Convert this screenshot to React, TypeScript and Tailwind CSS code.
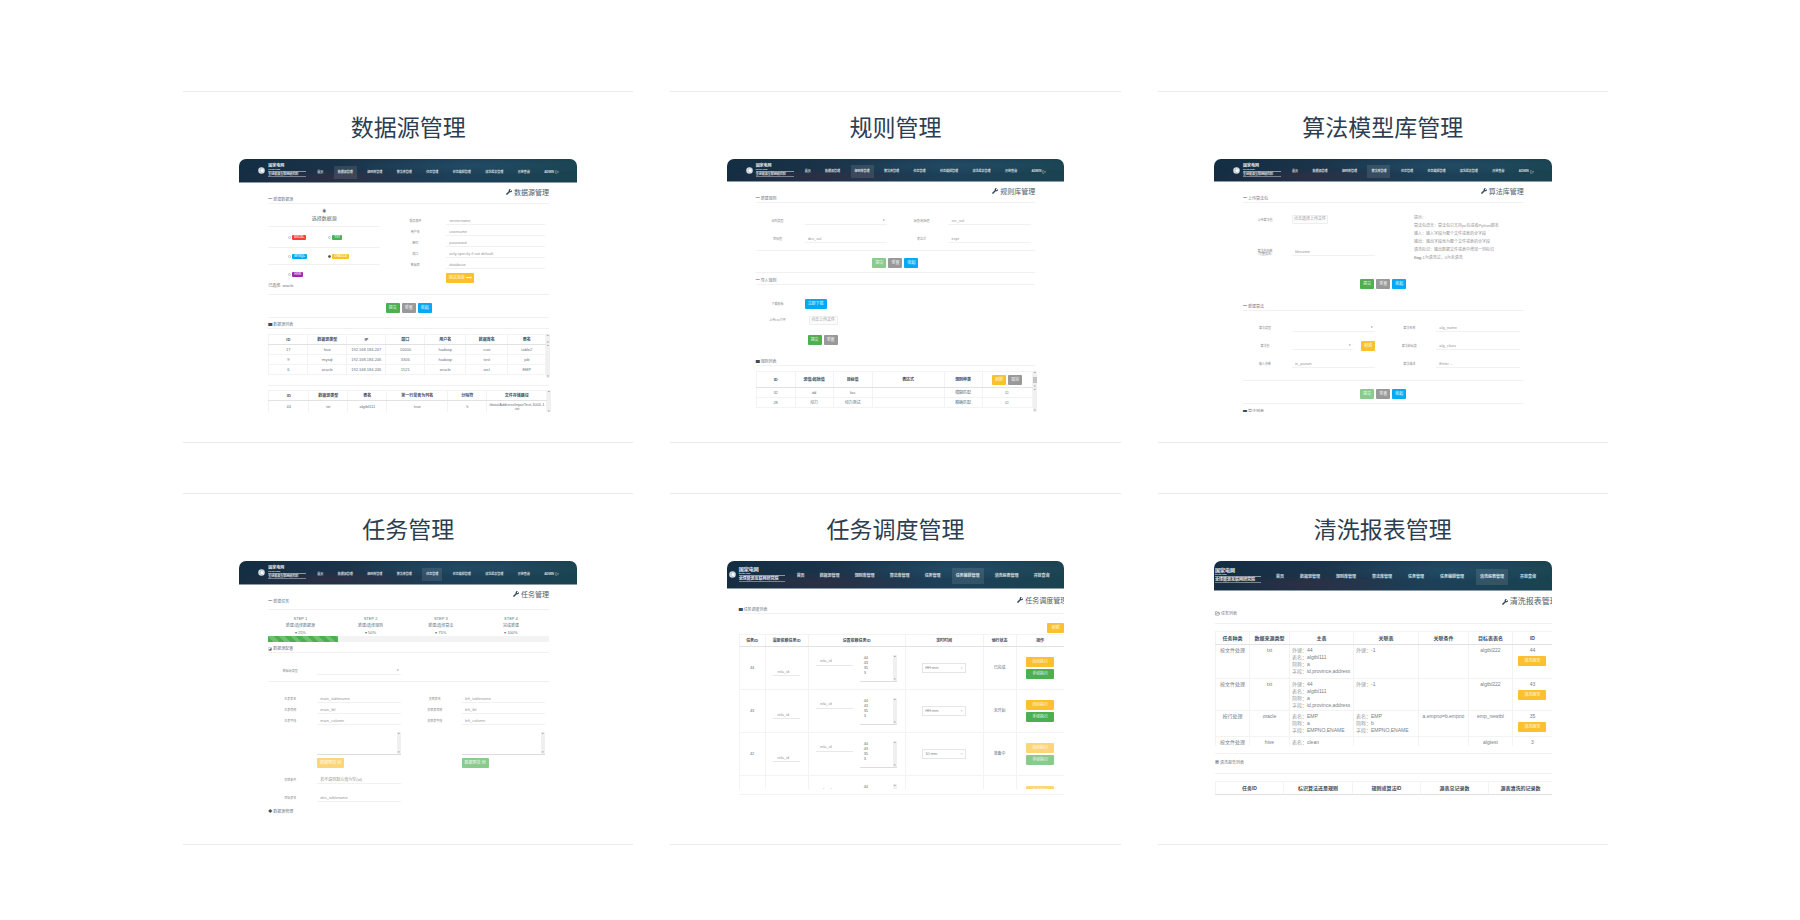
import { useId, type ReactNode } from 'react';
import clsx from 'clsx';
import { FolderOpen, LogOut } from 'lucide-react';
import { FaWrench } from 'react-icons/fa';

const navItems = ['首页', '数据源管理', '规则库管理', '算法库管理', '任务管理', '任务编辑管理', '清洗报表管理', '开放查询'];

const tones = {
  green: 'bg-[#4caf50]',
  gray: 'bg-[#999999]',
  blue: 'bg-[#03a9f4]',
  yellow: 'bg-[#fbc02d]',
  red: 'bg-[#f44336]',
  purple: 'bg-[#9c27b0]',
};

type Tone = keyof typeof tones;

function Btn({ tone, children, className = 'w-[14px]', faded }: { tone: Tone; children: ReactNode; className?: string; faded?: boolean }) {
  return (
    <button
      type="button"
      className={clsx('h-[10px] shrink-0 rounded-[1px] text-center text-[4px] leading-none whitespace-nowrap text-white/90', tones[tone], faded && 'opacity-65', className)}
    >
      {children}
    </button>
  );
}

function FormButtons({ faded }: { faded?: boolean }) {
  return (
    <div className="flex justify-center gap-[2px]">
      <Btn tone="green" faded={faded}>提交</Btn>
      <Btn tone="gray">重置</Btn>
      <Btn tone="blue">收起</Btn>
    </div>
  );
}

function Field({ label, placeholder, select, labelClass = 'w-[44px] mr-[5px]', className, extra }: {
  label: ReactNode;
  placeholder?: string;
  select?: boolean;
  labelClass?: string;
  className?: string;
  extra?: ReactNode;
}) {
  const id = useId();
  return (
    <div className={clsx('flex h-[8px] items-center', className)}>
      <label htmlFor={id} className={clsx('shrink-0 pt-[1px] text-center text-[3px] text-[#8c8c8c]', labelClass)}>{label}</label>
      <div className="mr-[4px] flex h-full min-w-0 flex-1 items-center border-b border-[#f1f1f1]">
        {select ? (
          <>
            <select id={id} className="h-full min-w-0 flex-1 appearance-none bg-transparent" />
            <span className="pr-[2px] text-[3px] text-[#666]">▾</span>
          </>
        ) : (
          <input id={id} placeholder={placeholder} className="h-full w-full min-w-0 bg-transparent pl-[3px] placeholder:text-[#9a9a9a]" />
        )}
      </div>
      {extra}
    </div>
  );
}

function SectionTitle({ icon = '━', children, className }: { icon?: ReactNode; children: ReactNode; className?: string }) {
  return (
    <h4 className={clsx('flex h-[7px] items-end gap-[1px] border-b border-[#f1f1f1] pb-[1px] text-[#6f7a85]', className)}>
      <span className="text-[#3d4c5a]">{icon}</span>
      {children}
    </h4>
  );
}

function PageTitle({ children, className }: { children: ReactNode; className?: string }) {
  return (
    <h3 className={clsx('flex items-center justify-end whitespace-nowrap text-[#4f5d6a]', className)}>
      <FaWrench className="mr-[2px] size-[6px] shrink-0 text-[#34495e]" />
      {children}
    </h3>
  );
}

function Scrollbar({ className, thumb }: { className?: string; thumb?: boolean }) {
  return (
    <div className={clsx('flex w-[4px] shrink-0 flex-col items-center justify-between bg-[#f0f0f0] text-[3px] text-[#888]', className)}>
      <span>▴</span>
      {thumb && <span className="h-[6px] w-[4px] bg-[#c4c4c4]" />}
      <span>▾</span>
    </div>
  );
}

function DataTable({ head, rows, widths, headHeight = 'h-[10px]', rowHeight = 'h-[10px]' }: {
  head: ReactNode[];
  rows: ReactNode[][];
  widths: string[];
  headHeight?: string;
  rowHeight?: string;
}) {
  return (
    <table className="w-full min-w-0 table-fixed border-collapse text-center text-[#66727e]">
      <thead>
        <tr className={headHeight}>
          {head.map((cell, i) => (
            <th key={i} className={clsx('border border-[#f3f3f3] border-b-[#e2e2e2] p-0 font-bold whitespace-nowrap text-[#3f4e5d]', widths[i])}>{cell}</th>
          ))}
        </tr>
      </thead>
      <tbody>
        {rows.map((row, r) => (
          <tr key={r} className={rowHeight}>
            {row.map((cell, i) => (
              <td key={i} className="border border-[#f3f3f3] p-0">{cell}</td>
            ))}
          </tr>
        ))}
      </tbody>
    </table>
  );
}

function Globe() {
  return (
    <svg viewBox="0 0 14 14" className="size-[7px] shrink-0">
      <circle cx="7" cy="7" r="6.5" fill="#dfe6ea" />
      <path d="M2 4 Q7 8 12 3 M1 8 Q7 12 13 7 M6 1 Q3 7 7 13 M8 1 Q11 7 8 13" stroke="#8fa3b0" fill="none" strokeWidth="0.8" />
      <circle cx="8" cy="7" r="3" fill="#ffffff" />
    </svg>
  );
}

function TopBar({ active, size = 'small', className = 'h-[24px]' }: { active: string; size?: 'small' | 'large' | 'cropped'; className?: string }) {
  const small = size === 'small';
  return (
    <header
      className={clsx(
        'flex items-center overflow-hidden border-b border-[#8d9ba6] whitespace-nowrap text-white/80',
        'bg-[radial-gradient(ellipse_at_28%_80%,#4a2a4066,transparent_30%),radial-gradient(ellipse_at_70%_30%,#2a5a7566,transparent_40%),linear-gradient(100deg,#132d42,#1b3348_30%,#1d4059_65%,#1a4350)]',
        small ? 'pl-[19px] text-[3px]' : 'text-[4px]',
        size === 'large' && 'pl-[2px]',
        size === 'cropped' && 'pl-[1px]',
        className,
      )}
    >
      {size !== 'cropped' && <Globe />}
      <div className={clsx('shrink-0 font-bold text-white/90', small ? 'ml-[3px] w-[38px]' : 'w-[46px]', size === 'large' && 'ml-[3px]')}>
        <div className={small ? 'text-[4px]' : 'text-[5px]'}>国家电网</div>
        <div className="border-b border-white/50 pb-[1px] text-[2px]">STATE GRID</div>
        <div className="mt-[1px] border-b border-white/40">全球能源互联网研究院</div>
      </div>
      <nav
        className={clsx(
          'flex h-full flex-1 items-center pt-[3px] font-bold',
          small && 'mr-[14px] ml-[7px] justify-between',
          size === 'large' && 'ml-[8px] gap-[7px]',
          size === 'cropped' && 'ml-[11px] gap-[8px]',
        )}
      >
        {navItems.map((item) => (
          <a key={item} href="#" className={clsx('flex shrink-0 items-center px-[4px]', small ? 'h-[13px]' : 'h-[16px]', item === active && 'bg-white/10')}>
            {item}
          </a>
        ))}
        <a href="#" className="flex shrink-0 items-center gap-[1px] px-[4px]">
          ADMIN <LogOut className="size-[4px]" />
        </a>
      </nav>
    </header>
  );
}

function SourceOption({ tone, label, checked }: { tone: Tone; label: string; checked?: boolean }) {
  return (
    <label className="flex w-[40px] items-center gap-[1px]">
      <input type="radio" name="source" defaultChecked={checked} className="size-[3px] appearance-none rounded-full border border-[#c4c4c4] checked:border-[#555] checked:bg-[#555]" />
      <span className={clsx('flex h-[5px] items-center rounded-[1px] px-[2px] text-[3px] font-bold text-white/80', tones[tone])}>{label}</span>
    </label>
  );
}

function SourcePreview() {
  const label = 'w-[62px] ml-[4px]';
  return (
    <>
      <TopBar active="数据源管理" />
      <div className="pr-[28px] pl-[29px]">
        <PageTitle className="mt-[4px] h-[10px] text-[7px]">数据源管理</PageTitle>
        <SectionTitle>新建数据源</SectionTitle>
        <div className="flex border-b border-[#f1f1f1] pb-[5px]">
          <div className="w-[112px]">
            <div className="flex h-[23px] flex-col items-center gap-[2px] border-b border-[#f1f1f1] pt-[6px] text-[#5c6975]">
              <span>◉</span>
              <span className="text-[5px]">选择数据源</span>
            </div>
            <div className="flex h-[21px] items-center border-b border-[#f1f1f1] pl-[20px]">
              <SourceOption tone="red" label="EXCEL" />
              <SourceOption tone="green" label="TXT" />
            </div>
            <div className="flex h-[17px] items-center border-b border-[#f1f1f1] pl-[20px]">
              <SourceOption tone="blue" label="MYSQL" />
              <SourceOption tone="yellow" label="ORACLE" checked />
            </div>
            <div className="flex h-[18px] items-center pl-[20px]">
              <SourceOption tone="purple" label="HIVE" />
            </div>
            <div className="flex h-[6px] items-center text-[#66727e]">已选择: oracle</div>
          </div>
          <div className="flex flex-1 flex-col gap-[3px] pt-[13px]">
            <Field labelClass={label} label="服务器IP" placeholder="servername" />
            <Field labelClass={label} label="用户名" placeholder="username" />
            <Field labelClass={label} label="密码" placeholder="password" />
            <Field labelClass={label} label="端口" placeholder="only specify if not default" />
            <Field labelClass={label} label="数据库" placeholder="database" />
            <Btn tone="yellow" className="mt-[1px] ml-[66px] w-[28px]">测试连接 ⟶</Btn>
          </div>
        </div>
        <div className="border-b border-[#f1f1f1] pt-[8px] pb-[4px]"><FormButtons /></div>
        <SectionTitle className="mt-[4px]" icon="▆">数据源列表</SectionTitle>
        <div className="mt-[5px] flex h-[44px] items-start">
          <DataTable
            widths={['w-[39px]', 'w-[39px]', 'w-[39px]', 'w-[39px]', 'w-[41px]', 'w-[42px]', 'w-[38px]']}
            head={['ID', '数据源类型', 'IP', '端口', '用户名', '数据库名', '表名']}
            rows={[
              ['17', 'hive', '192.168.184.247', '10000', 'hadoop', 'cust', 'table2'],
              ['9', 'mysql', '192.168.184.246', '3306', 'hadoop', 'test', 'job'],
              ['6', 'oracle', '192.168.184.246', '1521', 'oracle', 'orcl', 'EMP'],
            ]}
          />
          <div className="flex h-full flex-col">
            <Scrollbar className="h-[10px]" />
            <Scrollbar className="flex-1" />
          </div>
        </div>
        <div className="mt-[7px] flex items-stretch border-t border-[#f1f1f1] pt-[4px]">
          <DataTable
            widths={['w-[40px]', 'w-[39px]', 'w-[39px]', 'w-[61px]', 'w-[39px]', 'w-[60px]']}
            head={['ID', '数据源类型', '表名', '第一行是否为列名', '分隔符', '文件存储路径']}
            rows={[['44', 'txt', 'algtbl111', 'true', '\\t', <>/data/Address/inputTest,1000,1<br />.txt</>]]}
            rowHeight="h-[12px]"
          />
          <Scrollbar />
        </div>
      </div>
    </>
  );
}

function FileButton({ children, className }: { children: ReactNode; className?: string }) {
  return (
    <button type="button" className={clsx('h-[9px] rounded-[1px] border border-[#eeeeee] bg-[#fcfcfc] text-center text-[4px] leading-none whitespace-nowrap text-[#999]', className)}>
      {children}
    </button>
  );
}

function RulePreview() {
  return (
    <>
      <TopBar active="规则库管理" className="h-[23px]" />
      <div className="px-[29px]">
        <PageTitle className="mt-[4px] h-[10px] text-[7px]">规则库管理</PageTitle>
        <SectionTitle>新建规则</SectionTitle>
        <div className="grid grid-cols-2 gap-x-[8px] gap-y-[10px] border-b border-[#f1f1f1] pt-[14px] pb-[7px]">
          <Field label="规则类型" select />
          <Field label="源值/起始值" placeholder="src_val" />
          <Field label="目标值" placeholder="des_val" />
          <Field label="表达式" placeholder="expr" />
        </div>
        <div className="border-b border-[#f1f1f1] pt-[7px] pb-[4px]"><FormButtons faded /></div>
        <SectionTitle className="mt-[5px]">导入规则</SectionTitle>
        <div className="mt-[14px] flex h-[10px] items-center">
          <span className="mr-[5px] w-[44px] text-center text-[3px] text-[#8c8c8c]">下载模板</span>
          <Btn tone="blue" className="w-[22px]">立即下载</Btn>
        </div>
        <div className="mt-[6px] flex h-[10px] items-center">
          <span className="mr-[9px] w-[44px] text-center text-[3px] text-[#8c8c8c]">上传csv文件</span>
          <FileButton className="w-[29px]">点击上传文件</FileButton>
        </div>
        <div className="mt-[10px] flex gap-[2px] pl-[52px]">
          <Btn tone="green">提交</Btn>
          <Btn tone="gray">重置</Btn>
        </div>
        <SectionTitle className="mt-[14px]" icon="▆">规则列表</SectionTitle>
        <div className="mt-[5px] flex items-start">
          <DataTable
            widths={['w-[39px]', 'w-[38px]', 'w-[39px]', 'w-[72px]', 'w-[38px]', 'w-[50px]']}
            headHeight="h-[16px]"
            head={[
              'ID', '源值/起始值', '目标值', '表达式', '规则种类',
              <div key="actions" className="flex justify-center gap-[2px] font-normal">
                <Btn tone="yellow">刷新</Btn>
                <Btn tone="gray">取消</Btn>
              </div>,
            ]}
            rows={[
              ['32', 'dd', 'fas', '', '模糊匹配', '☑'],
              ['28', '动力', '动力测试', '', '精确匹配', '☑'],
            ]}
          />
          <div className="flex flex-col">
            <Scrollbar className="h-[17px]" thumb />
            <Scrollbar className="h-[24px]" />
          </div>
        </div>
      </div>
    </>
  );
}

const hints = [
  '提示：',
  '算法包语言：算法包只支持jar包或者Python脚本',
  '输入：输入字段为整个文件或表的全字段',
  '输出：输出字段也为整个文件或表的全字段',
  '清洗标识：输出数据文件或表中增加一列标识',
];

function AlgorithmPreview() {
  return (
    <>
      <TopBar active="算法库管理" className="h-[23px]" />
      <div className="pr-[28px] pl-[29px]">
        <PageTitle className="mt-[4px] h-[10px] text-[7px]">算法库管理</PageTitle>
        <SectionTitle>上传算法包</SectionTitle>
        <div className="flex h-[76px] pt-[11px]">
          <div className="w-[136px]">
            <div className="flex h-[10px] items-center">
              <span className="mr-[5px] w-[44px] pt-[2px] text-center text-[3px] text-[#8c8c8c]">上传算法包</span>
              <FileButton className="w-[36px]">点击选择上传文件</FileButton>
            </div>
            <Field className="mt-[24px]" label={<>算法包函数<br />（完整类名）</>} placeholder="filename" />
          </div>
          <div className="ml-[35px] whitespace-nowrap text-[#949494]">
            {hints.map((hint) => (
              <p key={hint} className="leading-[8px]">{hint}</p>
            ))}
            <p className="leading-[8px]"><b>flag:</b>1为清洗过，0为未清洗</p>
          </div>
        </div>
        <FormButtons />
        <SectionTitle className="mt-[15px]">新建算法</SectionTitle>
        <div className="grid grid-cols-2 gap-x-[8px] gap-y-[10px] border-b border-[#f1f1f1] pt-[13px] pb-[12px]">
          <Field label="算法类型" select />
          <Field label="算法名称" placeholder="alg_name" />
          <Field label="算法包" select extra={<Btn tone="yellow" className="mr-[4px] ml-[4px] w-[14px]">刷新</Btn>} />
          <Field label="算法启动类" placeholder="alg_class" />
          <Field label="输入参数" placeholder="in_param" />
          <Field label="算法描述" placeholder="Enter ..." />
        </div>
        <div className="border-b border-[#f1f1f1] pt-[8px] pb-[4px]"><FormButtons faded /></div>
        <SectionTitle className="mt-[5px]" icon="▆">算法列表</SectionTitle>
      </div>
    </>
  );
}

const steps = [
  ['STEP 1', '新建/选择数据源', '▾ 25%'],
  ['STEP 2', '新建/选择规则', '▾ 50%'],
  ['STEP 3', '新建/选择算法', '▾ 75%'],
  ['STEP 4', '完成新建', '▾ 100%'],
];

function ListArea({ label, className, children }: { label: string; className?: string; children?: string }) {
  return (
    <div className={clsx('flex border-b border-[#dddddd]', className)}>
      <textarea aria-label={label} defaultValue={children} className="h-full w-full min-w-0 resize-none overflow-hidden bg-transparent pl-[4px] leading-[5px]" />
      <Scrollbar />
    </div>
  );
}

function TaskPreview() {
  return (
    <>
      <TopBar active="任务管理" />
      <div className="pr-[28px] pl-[29px]">
        <PageTitle className="mt-[4px] h-[10px] text-[7px]">任务管理</PageTitle>
        <SectionTitle className="h-[11px] pb-[5px]">新建任务</SectionTitle>
        <div className="grid h-[26px] grid-cols-4 pt-[7px] text-center text-[#66727e]">
          {steps.map(([step, name, progress]) => (
            <div key={step} className="flex flex-col gap-[3px] pr-[6px]">
              <span>{step}</span>
              <span>{name}</span>
              <span>{progress}</span>
            </div>
          ))}
        </div>
        <div className="h-[6px] bg-[#f3f3f3]">
          <div className="h-full w-1/4 bg-[#4caf50] bg-[repeating-linear-gradient(45deg,transparent_0_4px,#ffffff33_4px_8px)]" />
        </div>
        <SectionTitle className="mt-[4px]" icon="◪">数据源配置</SectionTitle>
        <div className="grid grid-cols-2 gap-x-[8px] border-b border-[#f1f1f1] pt-[14px] pb-[6px]">
          <Field label="数据源类型" select />
        </div>
        <div className="grid grid-cols-2 gap-x-[8px] gap-y-[3px] pt-[13px]">
          <Field label="主表表名" placeholder="main_tablename" />
          <Field label="关联表名" placeholder="left_tablename" />
          <Field label="主表简称" placeholder="main_tbl" />
          <Field label="关联表简称" placeholder="left_tbl" />
          <Field label="主表字段" placeholder="main_column" />
          <Field label="关联表字段" placeholder="left_column" />
          <ListArea label="主表字段列表" className="mt-[4px] mr-[4px] ml-[49px] h-[23px]" />
          <ListArea label="关联表字段列表" className="mt-[4px] mr-[4px] ml-[49px] h-[23px]" />
          <Btn tone="yellow" faded className="ml-[49px] w-[27px]">数据预览 ▤</Btn>
          <Btn tone="green" faded className="ml-[49px] w-[27px]">数据预览 ▤</Btn>
        </div>
        <div className="grid grid-cols-2 gap-x-[8px] pt-[8px]">
          <Field label="关联条件" placeholder="若不填则默认值为空(id)" />
        </div>
        <div className="grid grid-cols-2 gap-x-[8px] pt-[10px]">
          <Field label="目标表名" placeholder="des_tablename" />
        </div>
        <SectionTitle className="mt-[7px]" icon="◆">数据源管理</SectionTitle>
      </div>
    </>
  );
}

const schedules = [
  { id: '44', time: 'HH:mm', status: '已完成', faded: false },
  { id: '43', time: 'HH:mm', status: '未开始', faded: false },
  { id: '42', time: '10:mm', status: '准备中', faded: true },
  { id: '41', time: 'HH:mm', status: '准备中', faded: true },
];

function SchedulePreview() {
  return (
    <>
      <TopBar active="任务编辑管理" size="large" className="h-[28px]" />
      <div className="pl-[12px]">
        <PageTitle className="mt-[6px] -mr-[3px] h-[10px] text-[7px]">任务调度管理</PageTitle>
        <SectionTitle className="mt-[2px]" icon="▆">任务调度列表</SectionTitle>
        <div className="flex justify-end pt-[9px]">
          <Btn tone="yellow" className="w-[17px]">刷新</Btn>
        </div>
        <div className="mt-[1px] h-[155px] overflow-hidden pr-[1px]">
          <DataTable
            widths={['w-[26px]', 'w-[43px]', 'w-[97px]', 'w-[78px]', 'w-[33px]', 'w-[48px]']}
            headHeight="h-[12px]"
            rowHeight="h-[43px]"
            head={['任务ID', '需要依赖任务ID', '设置依赖任务ID', '定时时间', '运行状态', '操作']}
            rows={schedules.map((row) => [
              row.id,
              <input key="rela" aria-label="依赖任务ID" placeholder="rela_id" className="mt-[7px] h-[9px] w-[27px] border-b border-[#e8e8e8] pl-[4px] placeholder:text-[#999]" />,
              <div key="set" className="flex justify-between pr-[8px] pl-[7px]">
                <input aria-label="设置依赖任务ID" placeholder="rela_id" className="mt-[1px] h-[10px] w-[37px] border-b border-[#e8e8e8] pl-[4px] placeholder:text-[#999]" />
                <ListArea label="任务ID列表" className="h-[27px] w-[37px]">{'44\n43\n35\n3'}</ListArea>
              </div>,
              <div key="time" className="mx-auto flex h-[10px] w-[44px] items-center border border-[#e6e6e6] px-[2px]">
                <select aria-label="定时时间" className="min-w-0 flex-1 appearance-none text-[#8a8a8a]">
                  <option>{row.time}</option>
                </select>
                <span className="text-[3px] text-[#bbb]">▾</span>
              </div>,
              row.status,
              <div key="ops" className="flex flex-col items-center gap-[2px]">
                <Btn tone="yellow" faded={row.faded} className="w-[28px]">自动执行</Btn>
                <Btn tone="green" faded={row.faded} className="w-[28px]">手动执行</Btn>
              </div>,
            ])}
          />
        </div>
        <div className="mt-[5px] h-px bg-[#f3f3f3]" />
      </div>
    </>
  );
}

function Lines({ lines }: { lines: [string, string][] }) {
  return (
    <div className="h-full pl-[2px] text-left leading-[7px]">
      {lines.map(([key, value]) => (
        <div key={key} className="whitespace-nowrap"><span className="text-[#999]">{key}：</span>{value}</div>
      ))}
    </div>
  );
}

function ReportPreview() {
  const top = (text: string) => <div className="leading-[7px]">{text}</div>;
  const action = (id: string) => (
    <div className="leading-[7px]">
      {id}
      <Btn tone="yellow" className="mx-auto mt-[2px] block w-[28px]">清洗报告</Btn>
    </div>
  );
  const fileLines: [string, string][] = [['外键', '44'], ['表名', 'algtbl111'], ['简称', 'a'], ['字段', 'id,province,address']];
  const rows = [
    { height: 'h-[34px]', cells: [top('按文件处理'), top('txt'), <Lines lines={fileLines} />, <Lines lines={[['外键', '-1']]} />, '', top('algtbl222'), action('44')] },
    { height: 'h-[32px]', cells: [top('按文件处理'), top('txt'), <Lines lines={fileLines} />, <Lines lines={[['外键', '-1']]} />, '', top('algtbl222'), action('43')] },
    {
      height: 'h-[26px]',
      cells: [
        top('按行处理'),
        top('oracle'),
        <Lines lines={[['表名', 'EMP'], ['简称', 'a'], ['字段', 'EMPNO,ENAME']]} />,
        <Lines lines={[['表名', 'EMP'], ['简称', 'b'], ['字段', 'EMPNO,ENAME']]} />,
        top('a.empno=b.empno'),
        top('emp_newtbl'),
        action('35'),
      ],
    },
    { height: 'h-[12px]', cells: [top('按文件处理'), top('hive'), <Lines lines={[['表名', 'clean']]} />, '', '', top('algtest'), top('3')] },
  ];
  const head: [string, string][] = [
    ['任务种类', 'w-[34px]'], ['数据来源类型', 'w-[40px]'], ['主表', 'w-[64px]'], ['关联表', 'w-[65px]'],
    ['关联条件', 'w-[50px]'], ['目标表表名', 'w-[44px]'], ['ID', 'w-[40px]'],
  ];
  return (
    <>
      <TopBar active="清洗报表管理" size="cropped" className="h-[30px]" />
      <div className="pl-[1px]">
        <PageTitle className="mt-[6px] -mr-[6px] h-[10px] text-[8px]">清洗报表管理</PageTitle>
        <SectionTitle className="mt-[2px] h-[15px] pb-[7px]" icon={<FolderOpen className="size-[5px]" />}>任务列表</SectionTitle>
        <div className="mt-[7px] h-[115px] overflow-hidden text-[5px]">
          <table className="w-full table-fixed border-collapse text-center text-[#75808b]">
            <thead>
              <tr className="h-[13px]">
                {head.map(([name, width]) => (
                  <th key={name} className={clsx('border border-[#f3f3f3] border-b-[#e2e2e2] p-0 whitespace-nowrap text-[#3f4e5d]', width)}>{name}</th>
                ))}
              </tr>
            </thead>
            <tbody>
              {rows.map((row, r) => (
                <tr key={r} className={clsx('align-top', row.height)}>
                  {row.cells.map((cell, i) => (
                    <td key={i} className="border border-[#f3f3f3] p-0 pt-[2px]">{cell}</td>
                  ))}
                </tr>
              ))}
            </tbody>
          </table>
        </div>
        <SectionTitle className="mt-[7px] h-[21px] border-t pb-[8px]" icon="▦">清洗报告列表</SectionTitle>
        <div className="mt-[7px] text-[5px]">
          <DataTable
            widths={['w-[68px]', 'w-[69px]', 'w-[68px]', 'w-[68px]', 'w-[64px]']}
            headHeight="h-[13px]"
            head={['任务ID', '标识算法还是规则', '规则或算法ID', '源表总记录数', '源表清洗的记录数']}
            rows={[]}
          />
        </div>
      </div>
    </>
  );
}

const cards = [
  { title: '数据源管理', preview: <SourcePreview /> },
  { title: '规则管理', preview: <RulePreview /> },
  { title: '算法模型库管理', preview: <AlgorithmPreview /> },
  { title: '任务管理', preview: <TaskPreview /> },
  { title: '任务调度管理', preview: <SchedulePreview /> },
  { title: '清洗报表管理', preview: <ReportPreview /> },
];

export default function App() {
  return (
    <main className="grid grid-cols-3 gap-x-[37px] gap-y-[50px] bg-white pt-[91px] pr-[192px] pb-[72px] pl-[183px] font-['Liberation_Sans','Noto_Sans_CJK_SC',sans-serif]">
      {cards.map((card) => (
        <section key={card.title} className="border-y border-[#ebebeb] pb-[30px]">
          <h2 className="pt-[20px] text-center text-[23px] leading-[32px] font-normal text-[#2c3e50]">{card.title}</h2>
          <div className="mx-auto mt-[15px] h-[253px] w-3/4 overflow-hidden rounded-t-[7px] text-[4px] leading-none">
            {card.preview}
          </div>
        </section>
      ))}
    </main>
  );
}
